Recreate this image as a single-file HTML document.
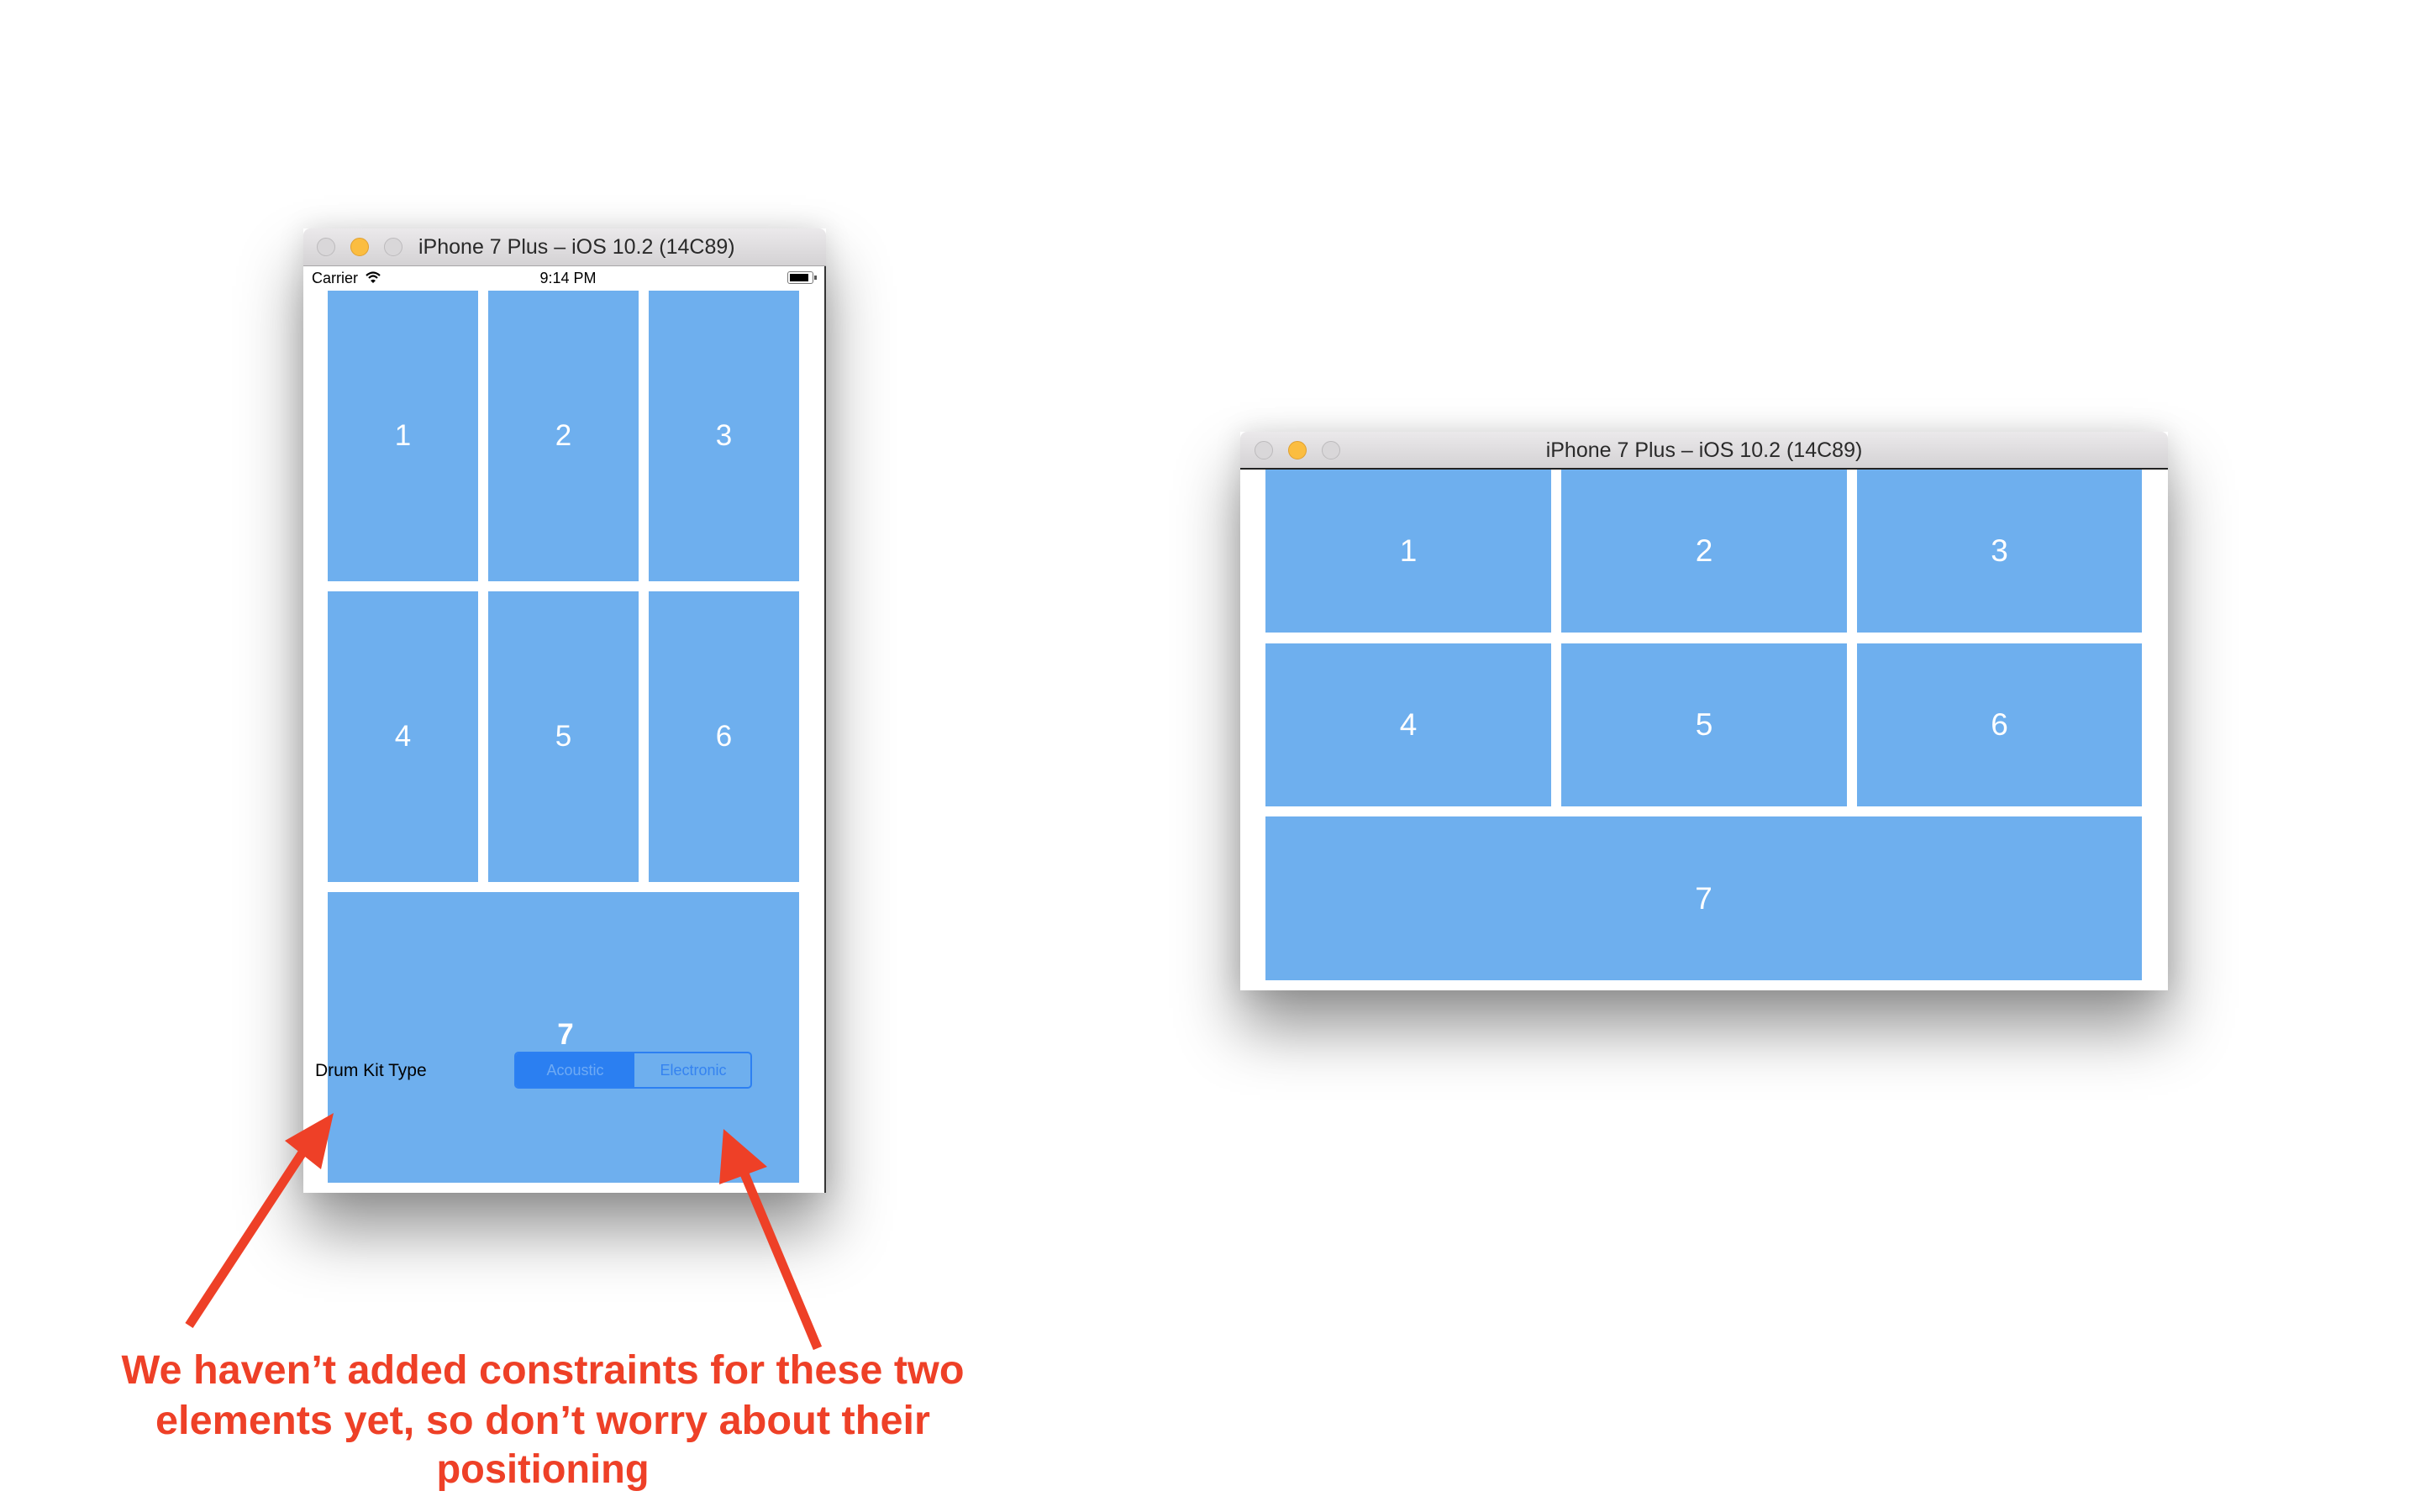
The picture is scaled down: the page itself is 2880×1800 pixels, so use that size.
<!DOCTYPE html>
<html><head><meta charset="utf-8"><style>
html,body{margin:0;padding:0;width:2880px;height:1800px;background:#fff;overflow:hidden;font-family:"Liberation Sans",sans-serif}
.abs{position:absolute}
.win{position:absolute;background:#fff;box-shadow:0 45px 70px rgba(0,0,0,0.42),0 0 30px rgba(0,0,0,0.12)}
.tb{position:absolute;left:0;right:0;top:0;background:linear-gradient(#ebe9eb,#d4d2d4);border-radius:8px 8px 0 0;border-bottom:1px solid #a8a6a8}
.tl{position:absolute;width:22px;height:22px;border-radius:50%;background:#d9d7d9;border:1px solid #bcbabc;box-sizing:border-box}
.tl.y{background:#fbbd40;border-color:#e0a030}
.tt{position:absolute;color:#2a2a2a;font-size:25px;white-space:nowrap}
.tile{position:absolute;background:#6eafee;color:#fff;display:flex;align-items:center;justify-content:center}
</style></head><body>

<!-- Left window -->
<div class="win" style="left:361px;top:272px;width:622px;height:1148px">
  <div class="abs" style="right:0;top:44px;width:2px;bottom:0;background:#333"></div>
  <div class="tb" style="height:44px">
    <div class="tl" style="left:16px;top:11px"></div>
    <div class="tl y" style="left:56px;top:11px"></div>
    <div class="tl" style="left:96px;top:11px"></div>
    <div class="tt" style="left:137px;top:8px">iPhone 7 Plus – iOS 10.2 (14C89)</div>
  </div>
</div>
<div class="abs" style="left:371px;top:321px;font-size:18px;color:#000">Carrier</div>
<svg class="abs" style="left:434px;top:322px" width="20" height="16" viewBox="0 0 20 16"><path d="M2 6 Q10 -1 18 6" stroke="#000" stroke-width="2.2" fill="none"/><path d="M5 9 Q10 4 15 9" stroke="#000" stroke-width="2.2" fill="none"/><path d="M7 12 L10 15 L13 12 Q10 9.5 7 12Z" fill="#000"/></svg>
<div class="abs" style="left:636px;top:321px;font-size:18px;color:#000;width:80px;text-align:center">9:14 PM</div>
<div class="abs" style="left:937px;top:323px;width:31px;height:15px;border:1.5px solid #777;border-radius:3px;box-sizing:border-box;padding:1.5px"><div style="width:22px;height:9px;background:#000"></div></div>
<div class="abs" style="left:969px;top:328px;width:3px;height:5px;background:#555"></div>

<div class="tile" style="left:390px;top:346px;width:179px;height:346px;font-size:35px">1</div>
<div class="tile" style="left:581px;top:346px;width:179px;height:346px;font-size:35px">2</div>
<div class="tile" style="left:772px;top:346px;width:179px;height:346px;font-size:35px">3</div>
<div class="tile" style="left:390px;top:704px;width:179px;height:346px;font-size:35px">4</div>
<div class="tile" style="left:581px;top:704px;width:179px;height:346px;font-size:35px">5</div>
<div class="tile" style="left:772px;top:704px;width:179px;height:346px;font-size:35px">6</div>
<div class="tile" style="left:390px;top:1062px;width:561px;height:346px"></div>
<div class="abs" style="left:648px;top:1212px;width:50px;text-align:center;color:#fff;font-size:35px;font-weight:bold">7</div>
<div class="abs" style="left:375px;top:1263px;font-size:21px;color:#000">Drum Kit Type</div>
<div class="abs" style="left:612px;top:1252px;width:283px;height:44px;border:2px solid #2d80f2;border-radius:5px;box-sizing:border-box;overflow:hidden;font-size:18px">
  <div class="abs" style="left:0;top:0;width:141px;height:40px;background:#2b7ff1;color:#6eaaf4;text-align:center;line-height:40px">Acoustic</div>
  <div class="abs" style="left:141px;top:0;width:140px;height:40px;color:#3583f0;text-align:center;line-height:40px">Electronic</div>
</div>

<!-- Right window -->
<div class="win" style="left:1476px;top:514px;width:1104px;height:665px">
  <div class="tb" style="height:43px;border-bottom:2px solid #222">
    <div class="tl" style="left:17px;top:11px"></div>
    <div class="tl y" style="left:57px;top:11px"></div>
    <div class="tl" style="left:97px;top:11px"></div>
    <div class="tt" style="left:0;right:0;text-align:center;top:8px">iPhone 7 Plus – iOS 10.2 (14C89)</div>
  </div>
</div>
<div class="tile" style="left:1506px;top:559px;width:340px;height:194px;font-size:37px">1</div>
<div class="tile" style="left:1858px;top:559px;width:340px;height:194px;font-size:37px">2</div>
<div class="tile" style="left:2210px;top:559px;width:339px;height:194px;font-size:37px">3</div>
<div class="tile" style="left:1506px;top:766px;width:340px;height:194px;font-size:37px">4</div>
<div class="tile" style="left:1858px;top:766px;width:340px;height:194px;font-size:37px">5</div>
<div class="tile" style="left:2210px;top:766px;width:339px;height:194px;font-size:37px">6</div>
<div class="tile" style="left:1506px;top:972px;width:1043px;height:195px;font-size:37px">7</div>

<!-- Arrows and annotation -->
<svg class="abs" style="left:0;top:0" width="2880" height="1800">
  <line x1="225" y1="1578" x2="360" y2="1372" stroke="#ee4027" stroke-width="11"/>
  <polygon points="397,1325 382,1392 339,1358" fill="#ee4027"/>
  <line x1="973" y1="1605" x2="885" y2="1395" stroke="#ee4027" stroke-width="11"/>
  <polygon points="861,1344 913,1389 856,1410" fill="#ee4027"/>
  <g fill="#ee4027" font-family="Liberation Sans, sans-serif" font-weight="bold" font-size="48" text-anchor="middle">
    <text x="646" y="1647" textLength="1003" lengthAdjust="spacingAndGlyphs">We haven’t added constraints for these two</text>
    <text x="646" y="1707" textLength="922" lengthAdjust="spacingAndGlyphs">elements yet, so don’t worry about their</text>
    <text x="646" y="1765" textLength="253" lengthAdjust="spacingAndGlyphs">positioning</text>
  </g>
</svg>
</body></html>
